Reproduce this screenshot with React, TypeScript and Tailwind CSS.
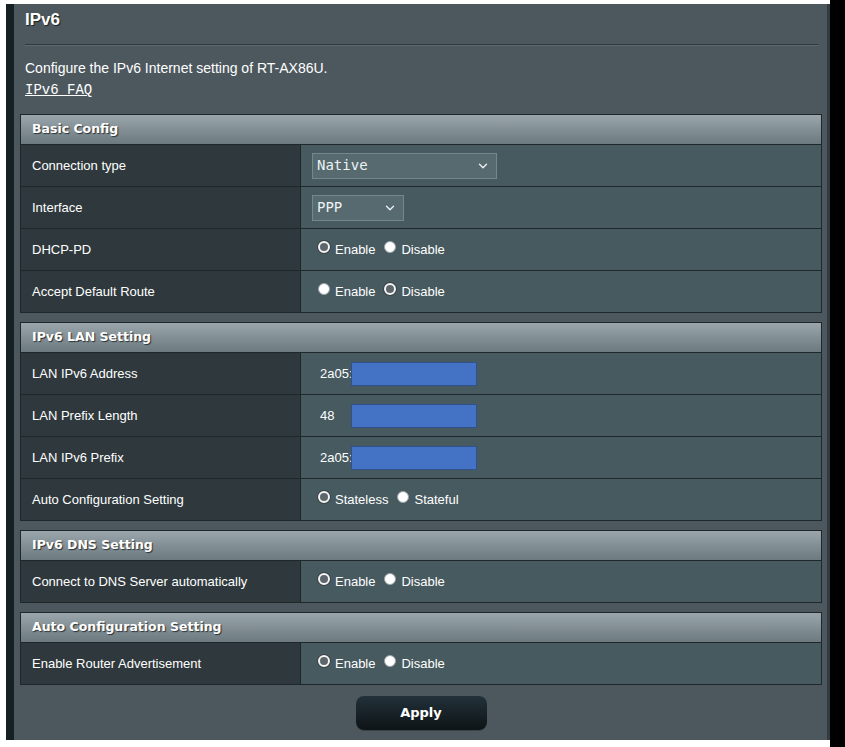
import { ChevronDown } from 'lucide-react';

type Row = { label: string; kind: 'select' | 'radio' | 'ip'; value?: string; width?: number; options?: [string, string]; checked?: 0 | 1 };

const sections: { title: string; rows: Row[] }[] = [
  {
    title: 'Basic Config',
    rows: [
      { label: 'Connection type', kind: 'select', value: 'Native', width: 185 },
      { label: 'Interface', kind: 'select', value: 'PPP', width: 92 },
      { label: 'DHCP-PD', kind: 'radio', options: ['Enable', 'Disable'], checked: 0 },
      { label: 'Accept Default Route', kind: 'radio', options: ['Enable', 'Disable'], checked: 1 },
    ],
  },
  {
    title: 'IPv6 LAN Setting',
    rows: [
      { label: 'LAN IPv6 Address', kind: 'ip', value: '2a05:' },
      { label: 'LAN Prefix Length', kind: 'ip', value: '48' },
      { label: 'LAN IPv6 Prefix', kind: 'ip', value: '2a05:' },
      { label: 'Auto Configuration Setting', kind: 'radio', options: ['Stateless', 'Stateful'], checked: 0 },
    ],
  },
  {
    title: 'IPv6 DNS Setting',
    rows: [{ label: 'Connect to DNS Server automatically', kind: 'radio', options: ['Enable', 'Disable'], checked: 0 }],
  },
  {
    title: 'Auto Configuration Setting',
    rows: [{ label: 'Enable Router Advertisement', kind: 'radio', options: ['Enable', 'Disable'], checked: 0 }],
  },
];

function Radio({ on }: { on: boolean }) {
  return on ? (
    <span className="inline-block size-[12px] -translate-y-[3px] rounded-full border-[2px] border-[#f4f4f4] bg-[#5d676b] shadow-[0_0_0_1px_#3a4347]" />
  ) : (
    <span className="inline-block size-[12px] -translate-y-[3px] rounded-full border border-[#9aa3a7] bg-white" />
  );
}

function Value({ row }: { row: Row }) {
  if (row.kind === 'select') {
    return (
      <div
        className="flex h-[26px] items-center justify-between border border-[#76878c] bg-[#566a70] pl-[4px] pr-[6px]"
        style={{ width: row.width }}
      >
        <span className="font-['DejaVu_Sans_Mono',monospace] text-[14px] text-[#eef3f4]">{row.value}</span>
        <ChevronDown size={14} strokeWidth={2.5} className="text-[#e6ecee]" />
      </div>
    );
  }
  if (row.kind === 'ip') {
    return (
      <div className="flex items-center pl-[8px]">
        <span className="w-[31px] text-[13px] text-white">{row.value}</span>
        <div className="h-[24px] w-[126px] border border-[#2f528f] bg-[#4472c4]" />
      </div>
    );
  }
  return (
    <div className="flex items-center gap-[5px] pl-[6px] text-[13px] text-white">
      <Radio on={row.checked === 0} />
      <span className="mr-[4px]">{row.options![0]}</span>
      <Radio on={row.checked === 1} />
      <span>{row.options![1]}</span>
    </div>
  );
}

export default function App() {
  return (
    <div className="flex h-[747px] w-[845px] bg-white font-['Liberation_Sans',Arial,sans-serif]">
      <div className="flex flex-1 pb-[7px] pl-[6px] pt-[4px]">
        <div className="w-[8px] bg-[#142024]" />
        <div className="flex flex-1 flex-col bg-[#4d585e] pl-[6px] pr-[5px]">
          <div className="pl-[5px] pt-[6px] text-[17px] font-bold leading-[20px] text-white [text-shadow:1px_1px_1px_#1a2226]">
            IPv6
          </div>
          <div className="ml-[5px] mr-[4px] mt-[14px] h-px bg-[#2e383c] shadow-[0_1px_0_#5f6a6f]" />
          <div className="mt-[13px] pl-[5px] text-[14px] leading-[20px] text-white">
            Configure the IPv6 Internet setting of RT-AX86U.
          </div>
          <div className="mt-[3px] pl-[5px] font-['Liberation_Mono',monospace] text-[14px] leading-[18px] text-white underline">
            IPv6_FAQ
          </div>
          <div className="mt-[15px] flex flex-col gap-[9px]">
            {sections.map((s) => (
              <div key={s.title} className="border border-[#1f272a]">
                <div className="flex h-[29px] items-center bg-linear-to-b from-[#9aa6ab] to-[#6c797f] pl-[11px] font-['DejaVu_Sans',Verdana,sans-serif] text-[12.5px] font-bold text-white [text-shadow:1px_1px_1px_#2a3236]">
                  {s.title}
                </div>
                {s.rows.map((r) => (
                  <div key={r.label} className="flex h-[42px] border-t border-[#1f272a]">
                    <div className="flex w-[279px] items-center bg-[#2f393d] pl-[11px] text-[13px] text-white">
                      {r.label}
                    </div>
                    <div className="flex flex-1 items-center border-l border-[#1f272a] bg-[#475a60] pl-[11px]">
                      <Value row={r} />
                    </div>
                  </div>
                ))}
              </div>
            ))}
          </div>
          <button className="mx-auto mt-[11px] flex h-[34px] w-[131px] items-center justify-center rounded-[8px] bg-linear-to-b from-[#22313a] to-[#0e1416] font-['DejaVu_Sans',Verdana,sans-serif] text-[13px] font-bold text-white shadow-[0_1px_0_#3b4549]">
            Apply
          </button>
        </div>
        <div className="w-[3px] bg-[#323b3f]" />
      </div>
      <div className="w-[15px] bg-black" />
    </div>
  );
}
